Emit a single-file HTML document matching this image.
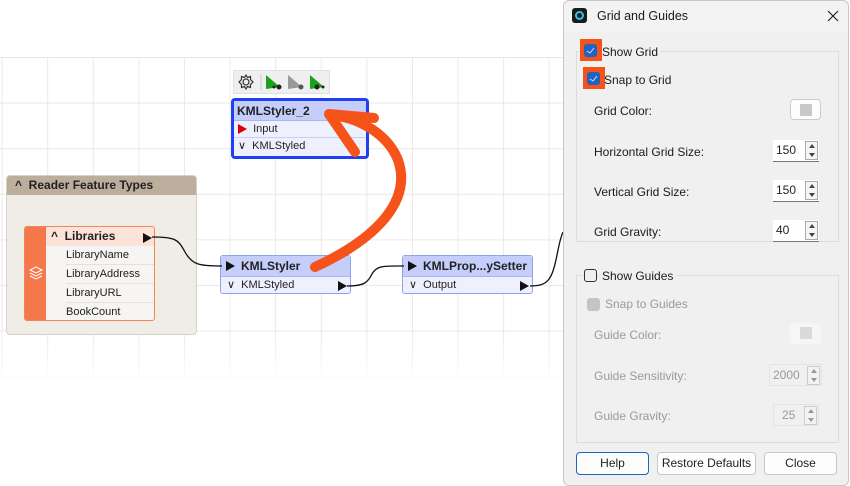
<!DOCTYPE html>
<html><head><meta charset="utf-8">
<style>
*{box-sizing:border-box;margin:0;padding:0}
body{width:850px;height:486px;overflow:hidden;background:#fff;font-family:"Liberation Sans",sans-serif;position:relative;font-size:12px;color:#222}
.grid{position:absolute;left:0;top:57px;width:563px;height:325px;
background-image:linear-gradient(#e9e9e9 1px,transparent 1px),linear-gradient(90deg,#e9e9e9 1px,transparent 1px);
background-size:45.6px 45.6px;background-position:1.6px 0}
.fade{position:absolute;left:0;top:335px;width:563px;height:50px;background:linear-gradient(rgba(255,255,255,0),#fff)}
.abs{position:absolute}
.node{position:absolute;background:#eef0fd;border:1px solid #8ea3ec;border-radius:3px}
.node .hd{background:#c5cdfa;font-weight:bold;font-size:12px;height:21px;line-height:21px;border-bottom:1px solid #aab6f0}
.node .row{height:17px;line-height:17px;font-size:11px;padding-left:6px}
.tri{display:inline-block;width:0;height:0;border-top:5px solid transparent;border-bottom:5px solid transparent;border-left:9px solid #111;vertical-align:middle}
.dlg{position:absolute;left:563px;top:0;width:286px;height:486px;background:#f0f0f0;border:1px solid #c8c8c8;border-radius:6px}
.lbl{position:absolute;font-size:12px;color:#1a1a1a}
.dis{color:#9a9a9a}
.spin{position:absolute;width:46px;height:22px;background:#fff;border-bottom:1px solid #777;font-size:12px;line-height:21px;padding-left:3px}
.spin .b{position:absolute;right:1px;top:1px;width:13px;height:19px;border:1px solid #aaa;background:#f5f5f5}
.spin .b:before,.spin .b:after{content:"";position:absolute;left:3px;border-left:3px solid transparent;border-right:3px solid transparent}
.spin .b:before{top:2px;border-bottom:4px solid #444}
.spin .b:after{bottom:2px;border-top:4px solid #444}
.spin.d{background:#f0f0f0;border:1px solid #e4e4e4;color:#999}
.btn{position:absolute;top:451px;height:23px;background:#fdfdfd;border:1px solid #c8c8c8;border-radius:4px;text-align:center;line-height:21px;font-size:12px}
.cb{position:absolute;width:13px;height:13px;border-radius:3px}
</style></head><body>
<div class="grid"></div><div class="fade"></div>

<div class="abs" style="left:233px;top:70px;width:97px;height:24px;background:#efefef;border:1px solid #e0e0e0"></div>
<svg class="abs" style="left:233px;top:70px" width="100" height="24">
<g transform="translate(13,12)" fill="none" stroke="#333" stroke-width="1.2"><circle r="3"/><path d="M0,-7 L1.5,-4.5 4.5,-5.5 4.5,-2.5 7,0 4.5,2.5 4.5,5.5 1.5,4.5 0,7 -1.5,4.5 -4.5,5.5 -4.5,2.5 -7,0 -4.5,-2.5 -4.5,-5.5 -1.5,-4.5Z"/></g>
<line x1="28" y1="4" x2="28" y2="20" stroke="#ccc"/>
<path d="M33,5 L33,19 L47,17 Z" fill="#1aa31a"/><circle cx="46" cy="17" r="2.5" fill="#222"/><circle cx="41" cy="17" r="1.5" fill="#222"/>
<path d="M55,5 L55,19 L69,17 Z" fill="#999"/><circle cx="68" cy="17" r="2.5" fill="#555"/>
<path d="M77,5 L77,19 L91,17 Z" fill="#1aa31a"/><circle cx="84" cy="17" r="2.5" fill="#222"/><circle cx="90" cy="17" r="1.5" fill="#222"/>
</svg>

<div class="node" style="left:231px;top:98px;width:138px;height:61px;border:3px solid #1f3ff0;border-radius:4px">
<div class="hd" style="padding-left:3px;height:20px;line-height:20px">KMLStyler_2</div>
<div class="row" style="border-bottom:1px solid #c8cff5;padding-left:4px"><span class="tri" style="border-left-color:#d00"></span> &nbsp;Input</div>
<div class="row" style="padding-left:4px">&#8744; &nbsp;KMLStyled</div>
</div>

<div class="abs" style="left:6px;top:175px;width:191px;height:160px;background:#f0ece6;border:1px solid #d6d0c8;border-radius:4px">
<div style="background:#bcae9c;height:19px;line-height:19px;font-weight:bold;font-size:12px;padding-left:8px;border-radius:3px 3px 0 0">^ &nbsp;Reader Feature Types</div>
</div>
<div class="abs" style="left:24px;top:226px;width:131px;height:95px;background:#f7f5f3;border:1px solid #f2855a;border-radius:3px;overflow:hidden">
<div class="abs" style="left:0;top:0;width:21px;height:95px;background:#f5784a"></div>
<svg class="abs" style="left:3px;top:38px" width="16" height="16" fill="none" stroke="#fff" stroke-width="1"><path d="M8,2 L14,5 8,8 2,5Z M2,8 L8,11 14,8 M2,11 L8,14 14,11"/></svg>
<div class="abs" style="left:21px;top:0;width:110px;height:19px;background:#fde2d8;font-weight:bold;line-height:19px;padding-left:5px">^ &nbsp;Libraries</div>
<div class="abs" style="left:21px;top:19px;width:110px;font-size:11px;line-height:18px;padding-left:20px">
<div style="border-bottom:1px solid #e8e0dc">LibraryName</div><div style="border-bottom:1px solid #e8e0dc">LibraryAddress</div><div style="border-bottom:1px solid #e8e0dc">LibraryURL</div><div>BookCount</div></div>
</div>
<span class="tri abs" style="left:143px;top:233px"></span>

<div class="node" style="left:220px;top:255px;width:131px;height:39px">
<div class="hd" style="padding-left:20px">KMLStyler</div>
<div class="row">&#8744; &nbsp;KMLStyled</div>
</div>
<span class="tri abs" style="left:226px;top:261px"></span>
<span class="tri abs" style="left:338px;top:281px"></span>

<div class="node" style="left:402px;top:255px;width:131px;height:39px">
<div class="hd" style="padding-left:20px">KMLProp...ySetter</div>
<div class="row">&#8744; &nbsp;Output</div>
</div>
<span class="tri abs" style="left:408px;top:261px"></span>
<span class="tri abs" style="left:520px;top:281px"></span>

<svg class="abs" style="left:0;top:0" width="563" height="486" fill="none">
<path d="M152,237 C175,237 178,239 185,252 C192,265 200,266 222,266" stroke="#111" stroke-width="1.3"/>
<path d="M347,286 C365,286 368,282 372,274 C377,265 385,266 404,266" stroke="#111" stroke-width="1.3"/>
<path d="M530,286 C548,286 552,280 557,255 C560,240 561,237 563,232" stroke="#111" stroke-width="1.3"/>
<path d="M315,267 C378,238 412,200 398,160 C388,135 362,120 338,116" stroke="#f5531a" stroke-width="10" stroke-linecap="round"/>
<path d="M374,118 L329,114 L355,152" stroke="#f5531a" stroke-width="10" stroke-linecap="round" stroke-linejoin="round"/>
</svg>

<div class="dlg">
<div class="abs" style="left:0;top:0;width:284px;height:31px;background:#f3f3f3;border-radius:6px 6px 0 0"></div>
<div class="abs" style="left:8px;top:7px;width:15px;height:15px;background:#1a1a1a;border-radius:3px"><div style="position:absolute;left:3px;top:3px;width:9px;height:9px;border:2px solid #2cc4e8;border-radius:50%"></div></div>
<div class="lbl" style="left:33px;top:8px;font-size:12.5px">Grid and Guides</div>
<svg class="abs" style="left:263px;top:9px" width="12" height="12" stroke="#222" stroke-width="1.2"><path d="M1,1 L11,11 M11,1 L1,11"/></svg>

<div class="abs" style="left:12px;top:50px;width:263px;height:191px;border:1px solid #dcdcdc"></div>
<div class="abs" style="left:16px;top:38px;width:22px;height:22px;background:#f5531a"></div>
<div class="cb" style="left:20px;top:43px;background:#1f63c4"></div>
<div class="lbl" style="left:38px;top:44px;background:#f0f0f0;padding-right:3px">Show Grid</div>
<div class="abs" style="left:19px;top:66px;width:22px;height:22px;background:#f5531a"></div>
<div class="cb" style="left:23px;top:71px;background:#1f63c4"></div>
<div class="lbl" style="left:40px;top:72px">Snap to Grid</div>
<svg class="abs" style="left:20px;top:43px" width="30" height="45" fill="none" stroke="#cfe0ff" stroke-width="1"><path d="M3,7 L6,9 10,4"/><path d="M6,35 L9,37 13,32"/></svg>

<div class="lbl" style="left:30px;top:103px">Grid Color:</div>
<div class="abs" style="left:226px;top:98px;width:31px;height:21px;background:#fdfdfd;border:1px solid #ccc;border-radius:4px"><div style="margin:4px auto;width:12px;height:12px;background:#c8c8c8"></div></div>
<div class="lbl" style="left:30px;top:144px">Horizontal Grid Size:</div>
<div class="spin" style="left:209px;top:139px">150<div class="b"></div></div>
<div class="lbl" style="left:30px;top:184px">Vertical Grid Size:</div>
<div class="spin" style="left:209px;top:179px">150<div class="b"></div></div>
<div class="lbl" style="left:30px;top:224px">Grid Gravity:</div>
<div class="spin" style="left:209px;top:219px">40<div class="b"></div></div>

<div class="abs" style="left:12px;top:274px;width:263px;height:168px;border:1px solid #dcdcdc"></div>
<div class="cb" style="left:20px;top:268px;background:#f0f0f0;border:1px solid #333"></div>
<div class="lbl" style="left:35px;top:268px;background:#f0f0f0;padding:0 3px">Show Guides</div>
<div class="cb" style="left:23px;top:297px;background:#c4c4c4"></div>
<div class="lbl dis" style="left:41px;top:296px">Snap to Guides</div>
<div class="lbl dis" style="left:30px;top:327px">Guide Color:</div>
<div class="abs" style="left:226px;top:322px;width:31px;height:21px;background:#f6f6f6;border-radius:4px"><div style="margin:4px auto;width:12px;height:12px;background:#dadada"></div></div>
<div class="lbl dis" style="left:30px;top:368px">Guide Sensitivity:</div>
<div class="spin d" style="left:205px;top:363px;width:53px">2000<div class="b" style="opacity:.5"></div></div>
<div class="lbl dis" style="left:30px;top:408px">Guide Gravity:</div>
<div class="spin d" style="left:209px;top:403px;padding-left:8px">25<div class="b" style="opacity:.5"></div></div>

<div class="btn" style="left:12px;width:73px;border:1px solid #1f63c4">Help</div>
<div class="btn" style="left:93px;width:99px">Restore Defaults</div>
<div class="btn" style="left:200px;width:73px">Close</div>
</div>
</body></html>
